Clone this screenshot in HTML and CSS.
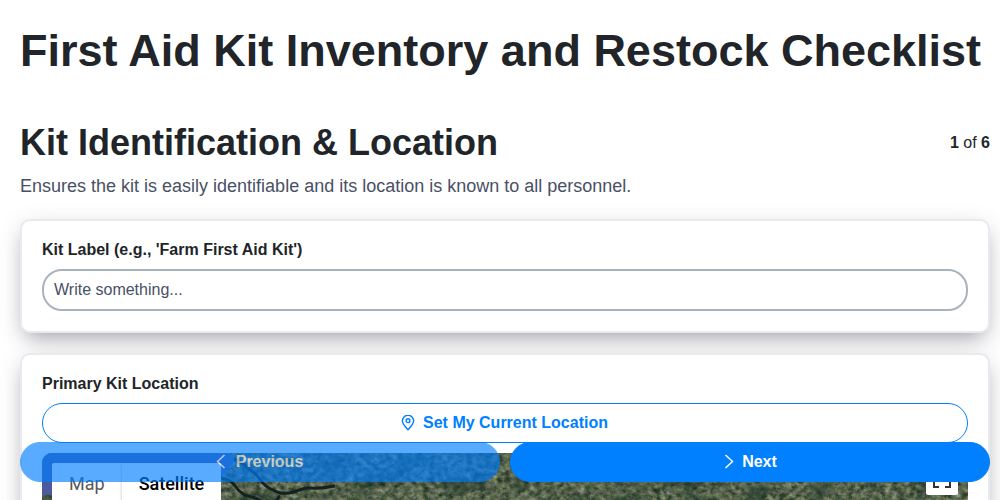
FILE: index.html
```
<!DOCTYPE html>
<html lang="en">
<head>
  <meta charset="UTF-8">
  <meta name="viewport" content="width=device-width, initial-scale=1.0">
  <title>First Aid Kit Inventory and Restock Checklist</title>
  <link rel="stylesheet" href="styles.css">
</head>
<body>
  <h1>First Aid Kit Inventory and Restock Checklist</h1>

  <form>
    <header class="page-header">
      <h2>Kit Identification &amp; Location</h2>
      <span class="page-count"><b>1</b> of <b>6</b></span>
    </header>
    <p class="page-intro">Ensures the kit is easily identifiable and its location is known to all personnel.</p>

    <section class="card">
      <label class="card-label" for="kitLabel">Kit Label (e.g., 'Farm First Aid Kit')</label>
      <input type="text" id="kitLabel" placeholder="Write something...">
    </section>

    <section class="card">
      <h3 class="card-label">Primary Kit Location</h3>
      <button type="button" class="btn btn-outline">
        <svg width="16" height="16" viewBox="0 0 16 16" fill="none" stroke="currentColor" stroke-width="1.4" aria-hidden="true">
          <path d="M8 14.7C5.2 11.5 2.4 8.8 2.4 5.9a5.6 5.6 0 0 1 11.2 0C13.6 8.8 10.8 11.5 8 14.7z"/>
          <circle cx="8" cy="5.7" r="1.9"/>
        </svg>
        Set My Current Location
      </button>

      <div class="map">
        <svg class="map-tiles" aria-hidden="true">
          <defs>
            <filter id="fields" x="0" y="0" width="100%" height="100%" color-interpolation-filters="sRGB">
              <feTurbulence type="fractalNoise" baseFrequency="0.16 0.2" numOctaves="5" seed="8"/>
              <feColorMatrix values="0.5 0.4 0 0 -0.11  0.4 0.4 0 0 -0.01  0.4 0.3 0.1 0 -0.1  0 0 0 0 1"/>
            </filter>
            <filter id="woods" x="0" y="0" width="100%" height="100%" color-interpolation-filters="sRGB">
              <feTurbulence type="fractalNoise" baseFrequency="0.03 0.05" numOctaves="4" seed="3"/>
              <feColorMatrix values="0 0 0 0 0.1  0 0 0 0 0.2  0 0 0 0 0.15  4 0 0 0 -2"/>
            </filter>
          </defs>
          <rect width="100%" height="100%" filter="url(#fields)"/>
          <rect width="100%" height="100%" filter="url(#woods)" opacity="0.5"/>
          <path class="map-sea" d="M0 0h186l7 8-12 14-6 20H0z"/>
          <path class="map-river" d="M192 6c10 3 12 8 19 13s8 12 16 16 10 6 20 5 12-6 22-5 14-1 24-2M178 25c8 1 12 3 16 9s8 9 16 10 10 8 18 7 6-5 10-8"/>
        </svg>
        <div class="map-types">
          <button type="button">Map</button>
          <button type="button" class="active">Satellite</button>
        </div>
        <button type="button" class="map-fullscreen" aria-label="Toggle fullscreen view">
          <svg width="18" height="18" viewBox="0 0 18 18" fill="#333" aria-hidden="true">
            <path d="M0 0v6h2V2h4V0zM18 0h-6v2h4v4h2zM16 12v4h-4v2h6v-6zM2 12H0v6h6v-2H2z"/>
          </svg>
        </button>
      </div>
    </section>

    <nav class="pager">
      <button type="button" class="btn btn-primary" disabled>
        <svg width="16" height="16" viewBox="0 0 16 16" fill="none" stroke="currentColor" stroke-width="1.5" aria-hidden="true">
          <path d="M11.5 1l-7 6.5 7 6.5"/>
        </svg>
        Previous
      </button>
      <button type="button" class="btn btn-primary">
        <svg width="16" height="16" viewBox="0 0 16 16" fill="none" stroke="currentColor" stroke-width="1.5" aria-hidden="true">
          <path d="M6.5 1l7 6.5-7 6.5"/>
        </svg>
        Next
      </button>
    </nav>
  </form>
</body>
</html>
```
FILE: styles.css
```
* {
  box-sizing: border-box;
}
html {
  scrollbar-width: none;
}
body {
  margin: 0;
  padding: 20px 10px 80px 20px;
  font-family: "Liberation Sans", Arial, sans-serif;
  font-size: 16px;
  line-height: 24px;
  color: #212529;
  background-color: #fff;
}
h1, h2, h3, p {
  margin: 0;
}
h1 {
  margin-bottom: 34px;
  font-size: 45px;
  line-height: 62px;
}
button, input {
  font: inherit;
}
button {
  cursor: pointer;
}

.page-header {
  display: flex;
  align-items: center;
  justify-content: space-between;
}
.page-header h2 {
  font-size: 36px;
  line-height: 54px;
}
.page-intro {
  margin: 4px 0 21px;
  font-size: 18px;
  color: #495065;
}

.card {
  margin-bottom: 20px;
  padding: 17px 20px 20px;
  border: 2px solid #e9e9f0;
  border-radius: 10px;
  background-color: #fff;
  box-shadow: 0 10px 20px -8px rgba(20, 20, 43, 0.36), 0 6px 26px rgba(20, 20, 43, 0.12);
}
.card-label {
  display: block;
  margin-bottom: 7px;
  font-size: 16px;
  font-weight: bold;
}
.card input {
  display: block;
  width: 100%;
  height: 42px;
  padding: 0 10px;
  border: 2px solid #a9b3bc;
  border-radius: 20px;
  color: inherit;
}
.card input::placeholder {
  color: #495065;
  opacity: 1;
}

.btn {
  display: flex;
  align-items: center;
  justify-content: center;
  gap: 7px;
  width: 100%;
  height: 40px;
  padding: 0 8px 0 6px;
  border: 1px solid #007fff;
  border-radius: 20px;
  font-weight: bold;
}
.btn-outline {
  color: #007fff;
  background-color: #fff;
}
.btn-primary {
  padding-right: 10px;
  color: #fff;
  background-color: #007fff;
}
.btn-primary:disabled {
  opacity: 0.65;
}

.map {
  position: relative;
  height: 300px;
  margin-top: 10px;
  overflow: hidden;
  border-radius: 10px;
  background-color: #4c5b44;
}
.map-tiles {
  display: block;
  width: 100%;
  height: 100%;
}
.map-sea {
  fill: #4c5a9e;
}
.map-river {
  fill: none;
  stroke: #14211f;
  stroke-width: 3px;
}
.map-types {
  position: absolute;
  top: 10px;
  left: 10px;
  display: flex;
  border-radius: 2px;
  background-color: #fff;
}
.map-types button {
  height: 42px;
  padding: 0 17px;
  border: 0;
  font-family: Roboto, Arial, sans-serif;
  font-size: 18px;
  color: #565656;
  background: none;
}
.map-types .active {
  font-weight: 500;
  color: #000;
  box-shadow: -1px 0 2px rgba(0, 0, 0, 0.15);
}
.map-fullscreen {
  position: absolute;
  top: 10px;
  right: 10px;
  display: flex;
  align-items: center;
  justify-content: center;
  width: 32px;
  height: 32px;
  padding: 0;
  border: 0;
  border-radius: 2px;
  background-color: #fff;
}

.pager {
  position: fixed;
  right: 10px;
  bottom: 18px;
  left: 20px;
  display: grid;
  grid-template-columns: 1fr 1fr;
  gap: 10px;
}
```
